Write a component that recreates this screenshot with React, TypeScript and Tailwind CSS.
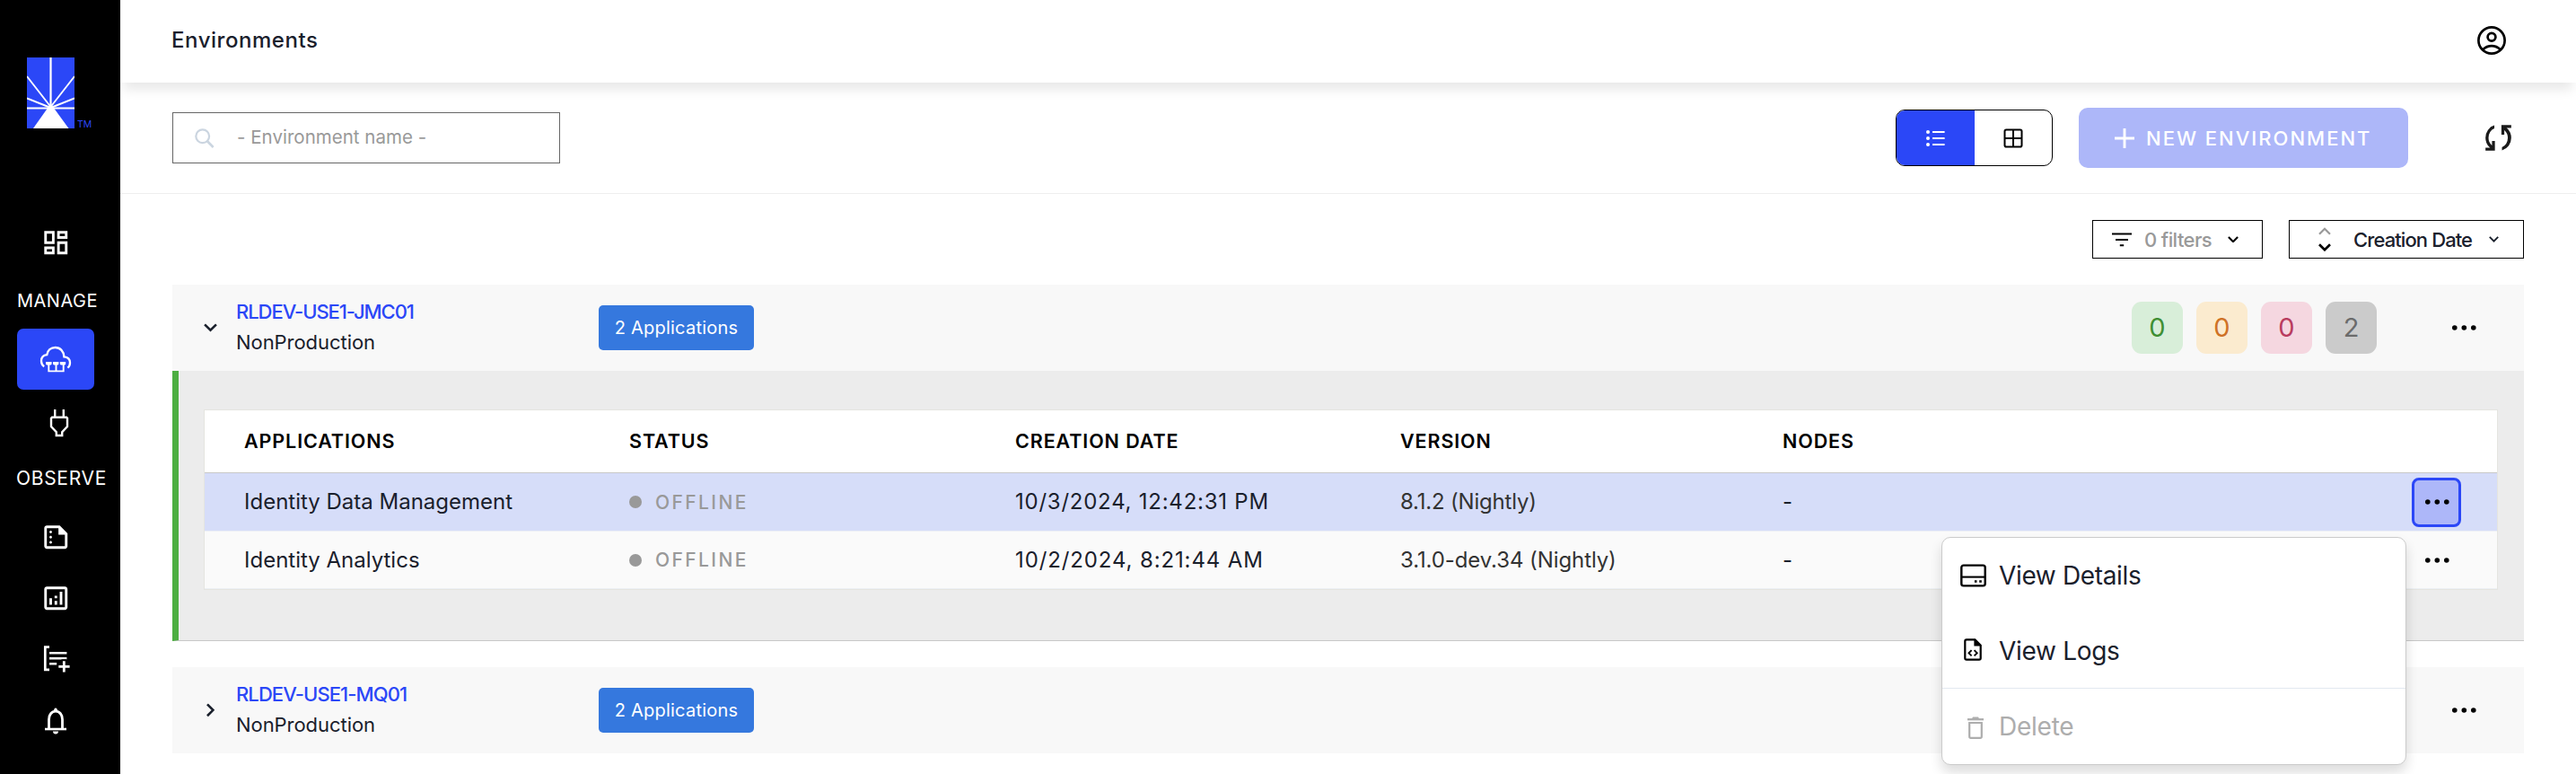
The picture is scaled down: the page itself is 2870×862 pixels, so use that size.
import React from "react";
import {
  MdOutlineAnalytics,
  MdOutlineDashboard,
  MdOutlineSummarize,
} from "react-icons/md";

function Logo() {
  return (
    <div className="ml-[30px] flex items-end gap-[3px]">
      <svg width="53" height="79" viewBox="0 0 53 79">
        <rect width="53" height="79" fill="#2b47f7" />
        <g stroke="#fff" strokeWidth="2.2">
          <path d="M26.5 0V56M0 56.5H53" />
          <path d="M26.5 55L0 21M26.5 55L53 21" strokeWidth="1.9" />
          <path d="M26.5 56L0 45.5M26.5 56L53 45.5" strokeWidth="1.9" />
        </g>
        <path d="M26.5 51.5L46.5 79H7L24 55Z" fill="#fff" />
      </svg>
      <span className="text-[10.5px] leading-[8px] text-[#2b47f7]">TM</span>
    </div>
  );
}

function CloudIcon() {
  return (
    <svg width="36" height="30" viewBox="0 0 36 30" fill="none" stroke="#fff">
      <path
        d="M5.2 23.2C2.8 21.6 2 19.2 2 17C2 13 4.6 10.6 8.2 10.2C9 5.2 12.6 2 17.6 2C23.2 2 27 6.2 27.4 12.4C31.6 12.8 34 15.4 34 19C34 21.2 33.2 23.2 31.4 24.6"
        strokeWidth="2.3"
      />
      <path d="M10.3 21V28.4H26.7V21M18.5 21V28.4" strokeWidth="1.9" />
      <path d="M7 18H13.6V20.4L12.6 21.6H8L7 20.4ZM15 18H21.4V20.4L20.4 21.6H16L15 20.4ZM22.8 18H29.2V20.4L28.2 21.6H23.8L22.8 20.4Z" fill="#fff" stroke="none" />
    </svg>
  );
}

function PlugIcon() {
  return (
    <svg width="22" height="31" viewBox="0 0 22 31" fill="none" stroke="#fff" strokeWidth="2.4">
      <path d="M6.2 0V9M15.8 0V9" />
      <path d="M2 9.8L3 8.8H19L20 9.8V19L14.2 25.2V29H7.8V25.2L2 19Z" />
    </svg>
  );
}

function PlaylistAddIcon() {
  return (
    <svg width="30" height="30" viewBox="0 0 30 30" fill="none" stroke="#fff" strokeWidth="2.6">
      <path d="M7 1.6H2.3V26.9H7" strokeWidth="2.7" />
      <path d="M7 8.3H26.4M7 14.2H26.4M7 20.2H15.2" />
      <path d="M16.4 19.4L20.8 15.2H26.4V17H25V21H16Z" fill="#000" stroke="none" />
      <path d="M23.3 17.2V29.6M17.3 23.3H29.6" strokeWidth="2.8" />
    </svg>
  );
}

function BellIcon() {
  return (
    <svg width="24" height="30" viewBox="0 0 24 30" fill="none" stroke="#fff">
      <path d="M4.5 23.2V13.2C4.5 8 7.6 4.2 12 4.2C16.4 4.2 19.5 8 19.5 13.2V23.2" strokeWidth="2.8" />
      <path d="M0 24H24" strokeWidth="2.6" />
      <path d="M10 4C10 2 10.6 0.6 12 0.6C13.4 0.6 14 2 14 4ZM9 26.6H15C15 28.4 13.8 29.6 12 29.6C10.2 29.6 9 28.4 9 26.6Z" fill="#fff" stroke="none" />
    </svg>
  );
}

function Sidebar() {
  return (
    <aside className="flex w-[134px] shrink-0 flex-col overflow-hidden bg-black text-[20px] text-white">
      <div className="h-16 shrink-0" />
      <Logo />
      <div className="mt-[93px] flex h-[68px] w-[124px] items-center justify-center">
        <MdOutlineDashboard size={34.5} />
      </div>
      <div className="mt-[16px] ml-[19px] h-[30px] leading-[30px] tracking-[0.5px]">MANAGE</div>
      <div className="mt-4 ml-[19px] flex h-[68px] w-[86px] items-center justify-center rounded-[7px] bg-[#2b47f7]">
        <CloudIcon />
      </div>
      <div className="mt-[3px] flex h-[68px] w-[132px] items-center justify-center">
        <PlugIcon />
      </div>
      <div className="mt-[13px] ml-[18px] h-[30px] text-[21px] leading-[30px] tracking-[0.7px]">OBSERVE</div>
      <div className="mt-[16px] flex h-[68px] w-[124px] items-center justify-center">
        <MdOutlineSummarize size={34.5} />
      </div>
      <div className="flex h-[68px] w-[124px] items-center justify-center">
        <MdOutlineAnalytics size={34.5} />
      </div>
      <div className="flex h-[68px] w-[126px] items-center justify-center">
        <PlaylistAddIcon />
      </div>
      <div className="flex h-[69px] w-[124px] items-center justify-center">
        <BellIcon />
      </div>
    </aside>
  );
}

function Chevron({ className, w, sw }: { className: string; w: number; sw: number }) {
  return (
    <svg className={className} width={w} height={(w * 9) / 14} viewBox="0 0 14 9" fill="none" stroke="currentColor" strokeWidth={sw}>
      <path d="M1 1.2L7 7.2L13 1.2" />
    </svg>
  );
}

function Dots() {
  return (
    <svg width="28" height="8" viewBox="0 0 28 8" fill="#000">
      <circle cx="3.8" cy="4" r="2.8" />
      <circle cx="14.3" cy="4" r="2.8" />
      <circle cx="24.8" cy="4" r="2.8" />
    </svg>
  );
}

function Header() {
  return (
    <header className="relative flex h-[92px] shrink-0 items-center justify-between bg-white pr-[78px] pb-[2px] pl-[57px] shadow-[0_12px_12px_-4px_rgba(0,0,0,0.09)]">
      <h1 className="pb-px text-[24px] font-medium tracking-[0.55px]">Environments</h1>
      <svg width="32" height="32" viewBox="0 0 32 32" fill="none" stroke="#000" strokeWidth="2.7">
        <circle cx="16" cy="16" r="14.6" />
        <circle cx="16" cy="12.2" r="4.4" />
        <path d="M6.4 26.2C9 23.6 12.3 22.2 16 22.2C19.7 22.2 23 23.6 25.6 26.2" />
      </svg>
    </header>
  );
}

function Toolbar() {
  return (
    <div className="flex h-[124px] shrink-0 items-center border-b border-[#eeeeee] pr-[65px] pl-[58px]">
      <div className="flex h-[57px] w-[432px] items-center border border-[#666] pl-[24px]">
        <svg width="22" height="22" viewBox="0 0 22 22" fill="none" stroke="#cbd5e0" strokeWidth="2.2">
          <circle cx="8.7" cy="8.7" r="7.4" />
          <path d="M13.8 14L20.6 21" strokeWidth="2.6" />
        </svg>
        <span className="ml-[25px] text-[20.5px] tracking-[0.02px] text-[#999]">- Environment name -</span>
      </div>
      <div className="ml-auto flex h-[63px] w-[175px] overflow-hidden rounded-[10px] border border-black">
        <div className="flex w-[87px] items-center justify-center bg-[#2b47f7]">
          <svg width="21" height="20" viewBox="0 0 21 20" fill="#fff">
            <circle cx="2" cy="2.9" r="2" />
            <circle cx="2" cy="10" r="2" />
            <circle cx="2" cy="17.1" r="2" />
            <path d="M7 1.9H20.6V3.9H7ZM7 9H20.6V11H7ZM7 16.1H20.6V18.1H7Z" />
          </svg>
        </div>
        <div className="flex grow items-center justify-center">
          <svg width="22" height="22" viewBox="0 0 22 22" fill="none" stroke="#000" strokeWidth="2">
            <rect x="1.5" y="1.5" width="19" height="19" rx="1.8" />
            <path d="M11 1.5V20.5M1.5 11H20.5" />
          </svg>
        </div>
      </div>
      <button className="ml-[29px] flex h-[67px] w-[367px] items-center rounded-[10px] bg-[#adb7f9] pl-10 text-white">
        <svg width="22" height="22" viewBox="0 0 22 22" stroke="#fff" strokeWidth="2.9">
          <path d="M11 0.5V21.5M0.5 11H21.5" strokeLinecap="round" />
        </svg>
        <span className="ml-[13px] text-[22px] leading-[30px] font-medium tracking-[2px]">NEW ENVIRONMENT</span>
      </button>
      <svg className="ml-[79px]" width="43" height="43" viewBox="0 -960 960 960" fill="#1a1a1a">
        <path d="M160-160v-72h118l-16-14q-52-46-77-107t-25-127q0-111 62-197.5T380-790v76q-65 26-105 90.5T235-480q0 50 17 92.5t53 78.5l17 16v-110h72v243H160Zm410-10v-76q65-26 105-90.5T715-480q0-50-17-92.5T645-651l-17-16v110h-72v-243h244v72H682l16 14q52 46 77 107t25 127q0 111-62 197.5T570-170Z" />
      </svg>
    </div>
  );
}

function Filters() {
  return (
    <div className="mt-[29px] mr-[58px] flex justify-end gap-[29px] text-[22px] leading-[30px] font-medium">
      <div className="flex h-[43px] w-[190px] items-center border border-black pl-[21px]">
        <svg width="22" height="16" viewBox="0 0 22 16" stroke="#000" strokeWidth="2.1">
          <path d="M0 1.5H22M4 8H18M8.8 14.3H13.2" />
        </svg>
        <span className="ml-[14px] w-[74px] tracking-[-0.6px] whitespace-nowrap text-[#999]">0 filters</span>
        <Chevron className="ml-[19px] text-black" w={12} sw={2.5} />
      </div>
      <div className="flex h-[43px] w-[262px] items-center border border-black pl-[32px]">
        <div className="flex flex-col gap-[9px]">
          <Chevron className="rotate-180 text-[#999]" w={14} sw={2.2} />
          <Chevron className="text-black" w={14} sw={2.7} />
        </div>
        <span className="ml-[25px] w-[134px] tracking-[-0.9px] whitespace-nowrap">Creation Date</span>
        <Chevron className="ml-[17px]" w={11} sw={2.4} />
      </div>
    </div>
  );
}

function Badge({ n, className }: { n: number; className: string }) {
  return <div className={"flex h-[58px] w-[57px] items-center justify-center rounded-[11px] text-[29px] font-[380] " + className}>{n}</div>;
}

function GroupRow({ name, nameClass, open }: { name: string; nameClass: string; open?: boolean }) {
  return (
    <div className="flex h-24 items-center bg-[#f8f8f8] pr-[53px] text-[22px]">
      <div className="flex w-[71px] justify-center pl-[14px]">
        {open ? <Chevron className="" w={15} sw={2.4} /> : <Chevron className="-rotate-90" w={15} sw={2.4} />}
      </div>
      <div className="w-[404px] pb-[2px] leading-[34px]">
        <div className={"font-medium text-[#2b47f7] " + nameClass}>{name}</div>
        <div className="tracking-[-0.05px]">NonProduction</div>
      </div>
      <div className="flex h-[50px] w-[173px] items-center justify-center rounded-[5px] bg-[#3578de] text-[20px] tracking-[0.22px] text-white">
        2 Applications
      </div>
      <div className="ml-auto flex items-center">
        {open && (
          <div className="mr-[83px] flex gap-[15px]">
            <Badge n={0} className="bg-[#d8eed9] text-[#3f8f33]" />
            <Badge n={0} className="bg-[#fbebcf] text-[#cf7226]" />
            <Badge n={0} className="bg-[#f5d7e0] text-[#b93c5e]" />
            <Badge n={2} className="bg-[#cbcbcb] text-[#6b6b6b]" />
          </div>
        )}
        <Dots />
      </div>
    </div>
  );
}

const COLS = "grid grid-cols-[429px_430px_429px_426px_1fr] items-center pl-[44px]";

const APPS = [
  { name: "Identity Data Management", date: "10/3/2024, 12:42:31 PM", version: "8.1.2 (Nightly)", active: true },
  { name: "Identity Analytics", date: "10/2/2024, 8:21:44 AM", version: "3.1.0-dev.34 (Nightly)", active: false },
];

function AppTable() {
  return (
    <div className="border border-[#e5e5e0]">
      <div className={"h-[70px] border-b border-[#c8c8c8] bg-white text-[21.5px] font-semibold tracking-[0.9px] text-black " + COLS}>
        <span>APPLICATIONS</span>
        <span>STATUS</span>
        <span>CREATION DATE</span>
        <span>VERSION</span>
        <span>NODES</span>
      </div>
      {APPS.map((app) => (
        <div
          key={app.name}
          className={
            "h-[64.5px] border-b border-[#edf0f5] pt-px text-[24px] " + COLS + (app.active ? " bg-[#d6ddf9]" : " bg-[#fafafa]")
          }
        >
          <span>{app.name}</span>
          <span className="flex items-center">
            <i className="size-[14px] rounded-full bg-[#999]" />
            <span className="ml-[15px] text-[21px] font-medium tracking-[2.4px] text-[#999]">OFFLINE</span>
          </span>
          <span className={app.active ? "tracking-[0.76px]" : "tracking-[0.88px]"}>{app.date}</span>
          <span className={"text-[#333] " + (app.active ? "tracking-[-0.2px]" : "tracking-[-0.1px]")}>{app.version}</span>
          <span className="flex items-center justify-between pr-10">
            <span>-</span>
            {app.active ? (
              <span className="flex h-[55px] w-[55px] items-center justify-center rounded-lg border-[3px] border-[#2b47f7] bg-[#adb7f9]">
                <Dots />
              </span>
            ) : (
              <span className="flex w-[55px] justify-center">
                <Dots />
              </span>
            )}
          </span>
        </div>
      ))}
    </div>
  );
}

function ContextMenu() {
  return (
    <div className="absolute top-[598px] left-[2163px] h-[254px] w-[518px] rounded-[10px] border border-[#cbcbcb] bg-white text-[28px] shadow-[0_8px_14px_rgba(0,0,0,0.14)]">
      <div className="flex h-[84px] items-center">
        <svg className="ml-[20px]" width="29" height="26" viewBox="0 0 29 26" fill="none" stroke="#000" strokeWidth="2.4">
          <rect x="1.3" y="1.6" width="26.4" height="22.8" rx="2.4" />
          <path d="M1.3 14.6H27.7" strokeWidth="2.1" />
          <path d="M15.9 19.5H18.5M21.2 19.5H23.8" />
        </svg>
        <span className="ml-[14px] tracking-[-0.35px]">View Details</span>
      </div>
      <div className="flex h-[84px] items-center border-b border-[#e2e8f0]">
        <svg className="-mt-0.5 ml-[24px]" width="20" height="25" viewBox="0 0 20 25" fill="none" stroke="#000" strokeWidth="2.2">
          <path d="M3 1.3H12.4L18.7 7.8V22C18.7 23 18 23.6 17 23.6H3C2 23.6 1.3 23 1.3 22V3C1.3 2 2 1.3 3 1.3Z" />
          <path d="M11.4 1V8.6H19.5L12.6 1Z" fill="#000" stroke="none" />
          <path d="M8.6 13.2L5.5 16.3L8.6 19.4M11.6 13.2L14.7 16.3L11.6 19.4" strokeWidth="1.9" />
        </svg>
        <span className="ml-[19px] tracking-[-0.3px]">View Logs</span>
      </div>
      <div className="flex h-[84px] items-center text-[#adadad]">
        <svg className="mt-0.5 ml-[28px]" width="18" height="25" viewBox="0 0 18 25" fill="none" stroke="currentColor" strokeWidth="2.2">
          <path d="M0 3.2H18" strokeWidth="2.3" />
          <path d="M4.8 2.6L6 0.6H12L13.2 2.6Z" fill="currentColor" stroke="none" />
          <path d="M2.2 7H15.8V22.2C15.8 23.2 15.2 23.8 14.2 23.8H3.8C2.8 23.8 2.2 23.2 2.2 22.2Z" />
        </svg>
        <span className="ml-[17px] tracking-[-0.25px]">Delete</span>
      </div>
    </div>
  );
}

export default function App() {
  return (
    <div className="relative flex h-[862px] w-[2870px] overflow-hidden bg-white font-['Inter','Liberation_Sans',sans-serif] text-[#1a202c]">
      <Sidebar />
      <main className="flex min-w-0 grow flex-col">
        <Header />
        <Toolbar />
        <Filters />
        <section className="mt-[29px] mr-[58px] ml-[58px]">
          <GroupRow name="RLDEV-USE1-JMC01" nameClass="tracking-[-1.05px]" open />
          <div className="h-[301px] border-b border-l-[7px] border-b-[#c8c8c8] border-l-[#4cae41] bg-[#ececec] pt-[43px] pr-[29px] pl-[28px]">
            <AppTable />
          </div>
          <div className="mt-[29px]">
            <GroupRow name="RLDEV-USE1-MQ01" nameClass="tracking-[-0.9px]" />
          </div>
        </section>
      </main>
      <ContextMenu />
    </div>
  );
}
